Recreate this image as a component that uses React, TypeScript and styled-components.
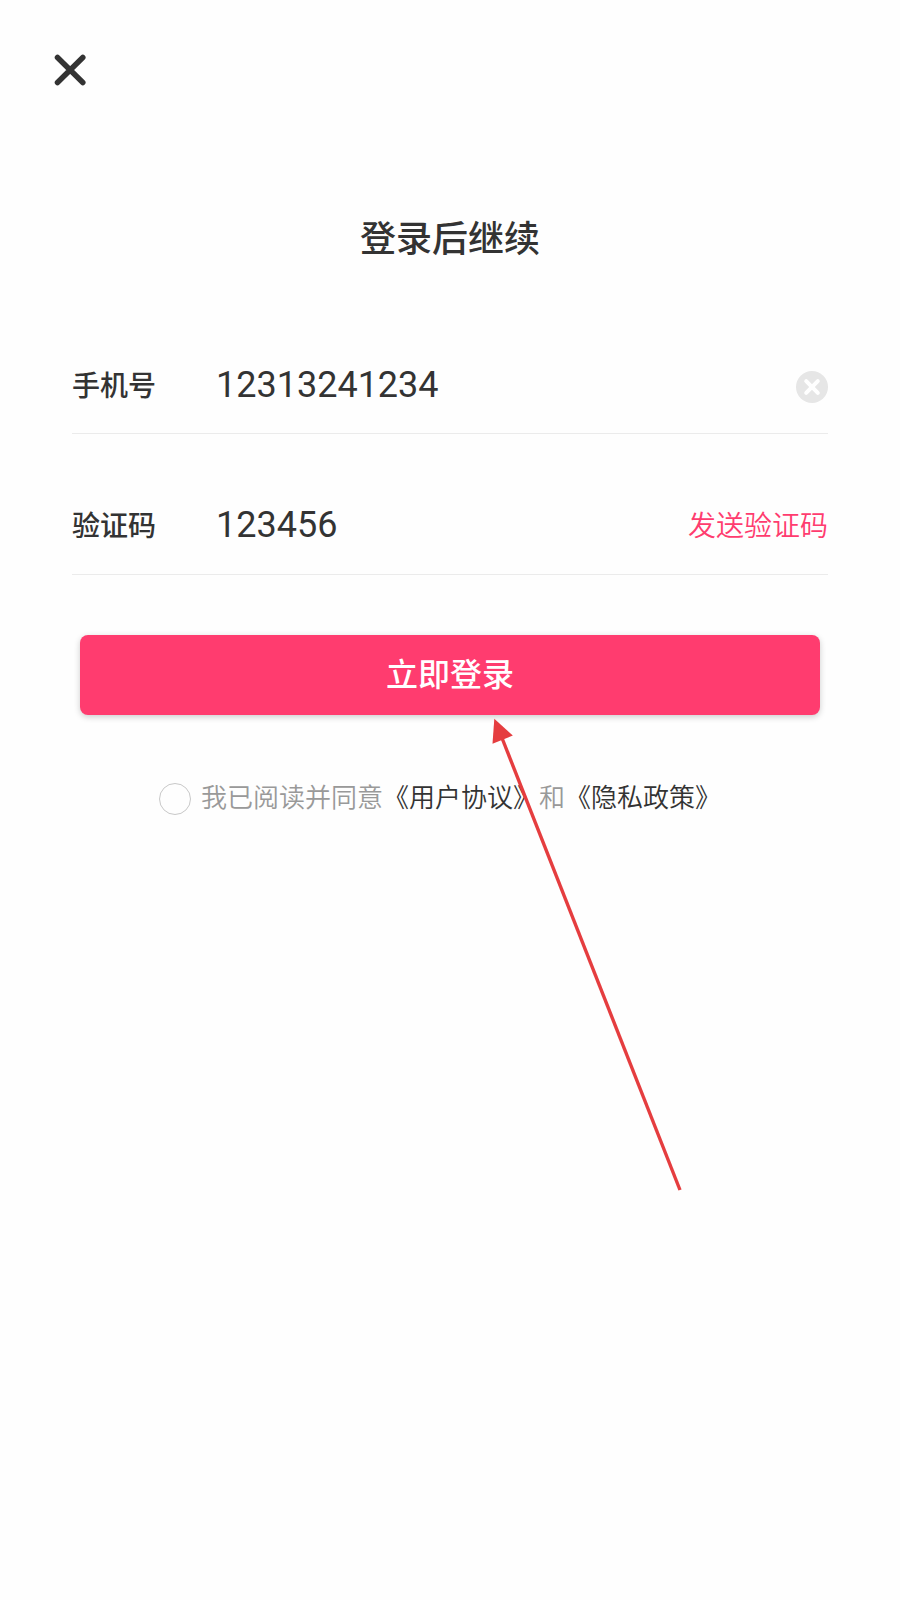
import React, { useState } from 'react';
import styled, { createGlobalStyle } from 'styled-components';

const GlobalStyle = createGlobalStyle`
  *, *::before, *::after { box-sizing: border-box; }
  body {
    margin: 0;
    background: #fefefe;
    color: #333;
    font-family: Roboto, "Noto Sans CJK SC", sans-serif;
    -webkit-font-smoothing: antialiased;
  }
  button, input { font: inherit; color: inherit; }
  button { padding: 0; border: 0; background: none; cursor: pointer; }
`;

const Page = styled.main`
  position: relative;
  min-height: 100vh;
  padding: 52px 72px 0;
  overflow: hidden;
`;

const CloseButton = styled.button`
  display: block;
  width: 36px;
  height: 36px;
  margin-left: -20px;
`;

const Icon = styled.svg`
  display: block;
  width: 100%;
  height: 100%;
`;

const Title = styled.h1`
  margin: 126px 0 0;
  font-size: 36px;
  line-height: 52px;
  font-weight: 500;
  text-align: center;
`;

const Form = styled.form`
  display: flex;
  flex-direction: column;
  margin-top: 72px;
`;

const Field = styled.div`
  display: flex;
  align-items: center;
  height: 96px;
  margin-bottom: 45px;
  border-bottom: 1px solid #ebebeb;
  &:first-child { padding-top: 2px; }
`;

const Label = styled.label`
  flex: none;
  width: 144px;
  font-size: 28px;
  line-height: 40px;
  font-weight: 500;
`;

const TextInput = styled.input`
  flex: 1;
  min-width: 0;
  padding: 0 0 4px;
  border: 0;
  outline: 0;
  background: none;
  font-size: 36px;
  line-height: 44px;
`;

const ClearButton = styled.button`
  flex: none;
  width: 32px;
  height: 32px;
`;

const SendButton = styled.button`
  flex: none;
  color: #ff3c6f;
  font-size: 28px;
  font-weight: 350;
  line-height: 40px;
`;

const LoginButton = styled.button`
  height: 80px;
  margin: 15px 8px 0;
  border-radius: 8px;
  background: #ff3c6f;
  box-shadow: 0 2px 6px rgba(0, 0, 0, 0.2);
  color: #fff;
  font-size: 32px;
  line-height: 48px;
  font-weight: 500;
`;

const Agreement = styled.div`
  display: flex;
  align-items: center;
  justify-content: center;
  gap: 10px;
  margin-top: 64px;
  padding-right: 20px;
`;

const Tick = styled.input`
  appearance: none;
  flex: none;
  width: 32px;
  height: 32px;
  margin: 0;
  border: 1px solid #c8c8c8;
  border-radius: 50%;
  &:checked { background: #ff3c6f; border-color: #ff3c6f; }
`;

const AgreementText = styled.label`
  padding-bottom: 2px;
  color: #999;
  font-size: 26px;
  font-weight: 350;
  line-height: 38px;
`;

const Policy = styled.a`
  color: #333;
  text-decoration: none;
`;

const Pointer = styled.svg`
  position: absolute;
  top: 718px;
  left: 50%;
  width: 240px;
  height: 480px;
  margin-left: 40px;
  pointer-events: none;
`;

export default function App() {
  const [phone, setPhone] = useState('12313241234');
  const [code, setCode] = useState('123456');

  return (
    <>
      <GlobalStyle />
      <Page>
        <CloseButton type="button" aria-label="关闭">
          <Icon viewBox="0 0 36 36" fill="none" stroke="#333" strokeWidth="5.5" strokeLinecap="round">
            <path d="M5.500 5.500 30.800 30.500M30.800 5.500 5.500 30.500" />
          </Icon>
        </CloseButton>
        <Title>登录后继续</Title>
        <Form onSubmit={(e) => e.preventDefault()}>
          <Field>
            <Label htmlFor="phone">手机号</Label>
            <TextInput id="phone" type="tel" value={phone} onChange={(e) => setPhone(e.target.value)} />
            <ClearButton type="button" aria-label="清除" onClick={() => setPhone('')}>
              <Icon viewBox="0 0 32 32" fill="none" strokeLinecap="round">
                <circle cx="16" cy="16" r="16" fill="#e6e6e6" />
                <path d="M10.200 10.200 21.800 21.800M21.800 10.200 10.200 21.800" stroke="#fff" strokeWidth="4" />
              </Icon>
            </ClearButton>
          </Field>
          <Field>
            <Label htmlFor="code">验证码</Label>
            <TextInput id="code" inputMode="numeric" value={code} onChange={(e) => setCode(e.target.value)} />
            <SendButton type="button">发送验证码</SendButton>
          </Field>
          <LoginButton type="submit">立即登录</LoginButton>
          <Agreement>
            <Tick id="agree" type="checkbox" />
            <AgreementText htmlFor="agree">
              我已阅读并同意<Policy href="#terms">《用户协议》</Policy>和<Policy href="#privacy">《隐私政策》</Policy>
            </AgreementText>
          </Agreement>
        </Form>
        <Pointer viewBox="0 0 240 480" aria-hidden="true">
          <path d="M12 20 190 472" stroke="#e53d3f" strokeWidth="3.4" />
          <path d="M4.300 .8 22.800 17.500 2.500 25.800Z" fill="#e53d3f" />
        </Pointer>
      </Page>
    </>
  );
}
